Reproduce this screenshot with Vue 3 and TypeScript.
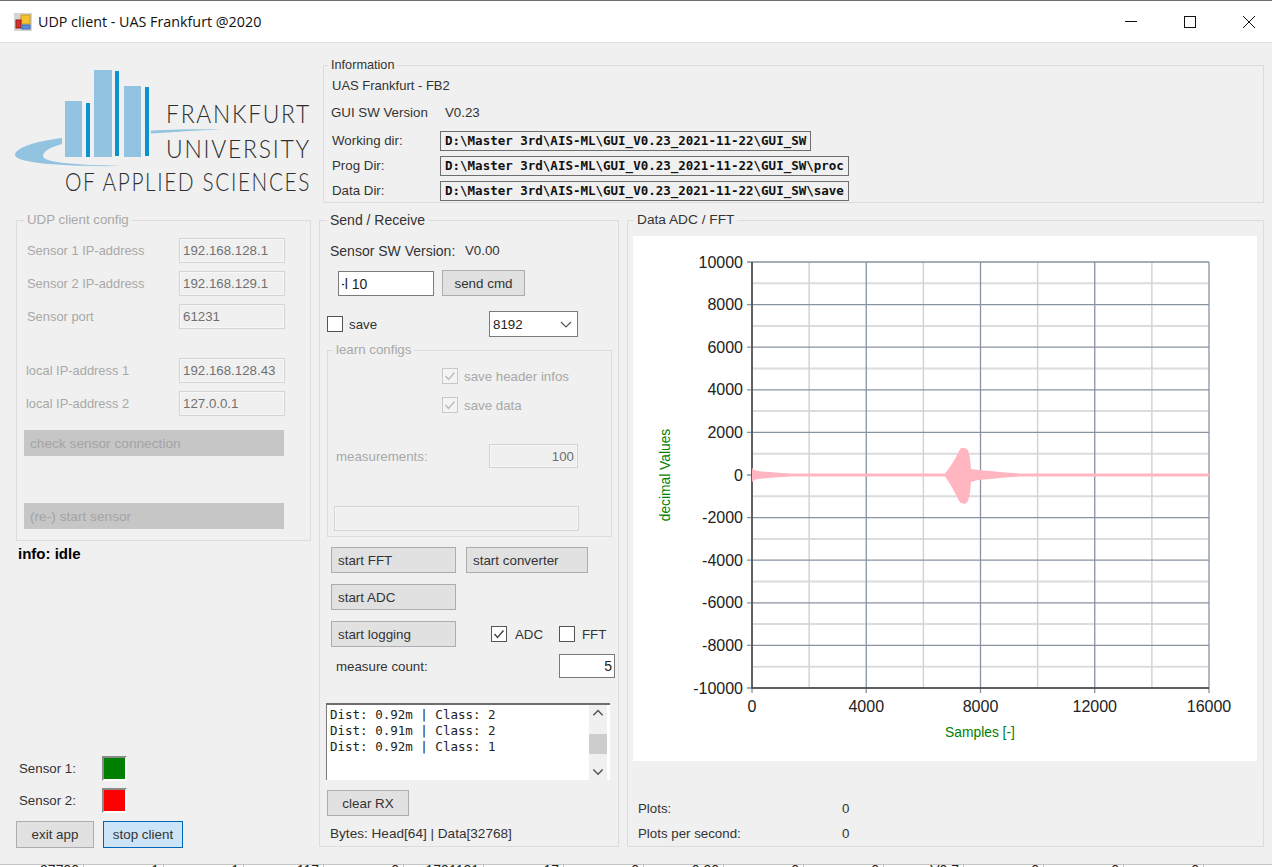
<template>
  <div class="window">
    <header class="titlebar">
      <svg class="app-icon" width="18" height="18" viewBox="0 0 18 18">
        <rect width="18" height="18" fill="#d4d4d4" />
        <rect x="7" y="2" width="9" height="9" fill="#f5c12e" stroke="#c89a1c" />
        <rect x="2" y="7" width="5" height="8" fill="#d8302a" stroke="#8f1d1a" />
        <rect x="8" y="12" width="8" height="4" fill="#5b8fdc" stroke="#3b6cb5" />
      </svg>
      <span class="title">UDP client - UAS Frankfurt @2020</span>
      <div class="win-controls">
        <svg width="58" height="42" viewBox="0 0 58 42"><path d="M23 20.5h12" stroke="#111" fill="none" /></svg>
        <svg width="58" height="42" viewBox="0 0 58 42"><rect x="23.5" y="15.5" width="11" height="11" stroke="#111" fill="none" /></svg>
        <svg width="58" height="42" viewBox="0 0 58 42"><path d="M23 15l12 12M35 15L23 27" stroke="#111" fill="none" /></svg>
      </div>
    </header>

    <main class="body">
      <section class="left">
        <svg class="logo" width="319" height="177" viewBox="0 43 319 177">
          <path d="M62 138C30 142 15 149 15 155c0 7 40 12 110 11-45-1-82-3-82-10 0-5 8-9 19-12z" fill="#92c3e0" />
          <path d="M151 130.500c25-1 50-1.500 70-1-25 1-48 2.500-70 4z" fill="#92c3e0" />
          <rect x="65" y="101" width="17" height="56" fill="#92c3e0" />
          <rect x="86" y="103" width="4" height="54" fill="#0b93cf" />
          <rect x="94" y="70" width="18" height="87" fill="#92c3e0" />
          <rect x="115" y="71" width="4" height="85" fill="#0b93cf" />
          <rect x="124" y="86" width="17" height="71" fill="#92c3e0" />
          <rect x="145" y="87" width="4" height="69" fill="#0b93cf" />
          <text x="166" y="123" class="logo-text" textLength="145" lengthAdjust="spacingAndGlyphs">FRANKFURT</text>
          <text x="166" y="158" class="logo-text" textLength="145" lengthAdjust="spacingAndGlyphs">UNIVERSITY</text>
          <text x="65" y="191" class="logo-text" textLength="246" lengthAdjust="spacingAndGlyphs">OF APPLIED SCIENCES</text>
        </svg>

        <div class="group udp disabled">
          <span class="legend">UDP client config</span>
          <div class="field" v-for="f in udpFields" :key="f.label" :class="f.cls">
            <label>{{ f.label }}</label>
            <input class="dis-input" readonly :value="f.value" />
          </div>
          <button class="dis-btn check">check sensor connection</button>
          <button class="dis-btn restart">(re-) start sensor</button>
        </div>

        <div class="info-idle">info: idle</div>

        <div class="bottom-left">
          <div class="sensor"><span>Sensor 1:</span><i class="lamp green"></i></div>
          <div class="sensor s2"><span>Sensor 2:</span><i class="lamp red"></i></div>
          <div class="app-btns">
            <button class="btn exit">exit app</button>
            <button class="btn stop">stop client</button>
          </div>
        </div>
      </section>

      <section class="right">
        <div class="group information">
          <span class="legend">Information</span>
          <div class="line first">UAS Frankfurt - FB2</div>
          <div class="line version"><span class="ver-label">GUI SW Version</span><span>V0.23</span></div>
          <div class="dir" v-for="d in dirs" :key="d.label">
            <span class="dir-label">{{ d.label }}</span>
            <span class="dir-box">{{ d.path }}</span>
          </div>
        </div>

        <div class="work">
          <div class="group send">
            <span class="legend">Send / Receive</span>
            <div class="sw"><span class="sw-label">Sensor SW Version:</span><span>V0.00</span></div>
            <div class="cmd-row">
              <input class="cmd" readonly value="-l 10" />
              <button class="btn send-cmd">send cmd</button>
            </div>
            <div class="save-row">
              <span class="check-box"></span><span class="save-label">save</span>
              <div class="select">
                <span>8192</span>
                <svg width="12" height="7" viewBox="0 0 12 7"><path d="M1 1l5 5 5-5" stroke="#555" stroke-width="1.200" fill="none" /></svg>
              </div>
            </div>

            <div class="group learn disabled">
              <span class="legend">learn configs</span>
              <div class="opt first-opt">
                <span class="check-box dis"><svg width="14" height="14" viewBox="0 0 14 14"><path d="M2.500 7l3 3.500 6-7" stroke="#bbb" stroke-width="1.400" fill="none" /></svg></span>
                <span>save header infos</span>
              </div>
              <div class="opt second-opt">
                <span class="check-box dis"><svg width="14" height="14" viewBox="0 0 14 14"><path d="M2.500 7l3 3.500 6-7" stroke="#bbb" stroke-width="1.400" fill="none" /></svg></span>
                <span>save data</span>
              </div>
              <div class="measure">
                <label>measurements:</label>
                <input class="dis-input num" readonly value="100" />
              </div>
              <input class="dis-input wide" readonly value="" />
            </div>

            <div class="btn-row r1">
              <button class="btn big">start FFT</button>
              <button class="btn conv">start converter</button>
            </div>
            <div class="btn-row r2"><button class="btn big">start ADC</button></div>
            <div class="btn-row r3">
              <button class="btn big">start logging</button>
              <span class="check-box adc"><svg width="14" height="14" viewBox="0 0 14 14"><path d="M2.500 7l3 3.500 6-7" stroke="#444" stroke-width="1.400" fill="none" /></svg></span>
              <span class="adc-label">ADC</span>
              <span class="check-box fft"></span>
              <span class="fft-label">FFT</span>
            </div>
            <div class="count-row">
              <span>measure count:</span>
              <input class="count" readonly value="5" />
            </div>

            <div class="rx">
              <div class="rx-text">
                <div v-for="(l, i) in rxLines" :key="i">{{ l }}</div>
              </div>
              <div class="scroll">
                <svg width="18" height="18" viewBox="0 0 18 18"><path d="M4 11l5-5 5 5" stroke="#555" stroke-width="1.600" fill="none" /></svg>
                <div class="thumb"></div>
                <svg width="18" height="18" viewBox="0 0 18 18"><path d="M4 7l5 5 5-5" stroke="#555" stroke-width="1.600" fill="none" /></svg>
              </div>
            </div>

            <button class="btn clear">clear RX</button>
            <div class="bytes">Bytes: Head[64] | Data[32768]</div>
          </div>

          <div class="group data">
            <span class="legend">Data ADC / FFT</span>
            <svg class="chart" width="624" height="525" viewBox="633 236 624 525">
              <rect x="633" y="236" width="624" height="525" fill="#fff" />
              <path v-for="y in minorY" :key="'my' + y" :d="`M752 ${y}H1209`" stroke="#dcdcdc" stroke-width="2" />
              <path v-for="x in minorX" :key="'mx' + x" :d="`M${x} 262V688`" stroke="#d4d4d4" stroke-width="1.500" />
              <path v-for="t in yTicks" :key="'y' + t.v" :d="`M747 ${t.y}H1209`" stroke="#8793a0" stroke-width="1.300" />
              <path v-for="t in xTicks" :key="'x' + t.v" :d="`M${t.x} 262V693`" stroke="#8793a0" stroke-width="1.300" />
              <path d="M752 262V688H1209" stroke="#444" stroke-width="1.500" fill="none" />
              <polygon :points="wave" fill="#ffb6c1" />
              <text v-for="t in yTicks" :key="'yl' + t.v" x="743" :y="t.y + 5.500" class="tick" text-anchor="end">{{ t.v }}</text>
              <text v-for="t in xTicks" :key="'xl' + t.v" :x="t.x" y="712" class="tick" text-anchor="middle">{{ t.v }}</text>
              <text x="980" y="737" class="axis" text-anchor="middle">Samples [-]</text>
              <text class="axis" text-anchor="middle" transform="translate(670 475) rotate(-90)">decimal Values</text>
            </svg>
            <div class="plots">
              <div class="plot-row"><span class="plot-label">Plots:</span><span>0</span></div>
              <div class="plot-row"><span class="plot-label">Plots per second:</span><span>0</span></div>
            </div>
          </div>
        </div>
      </section>
    </main>

    <footer class="behind">
      <span v-for="(c, i) in behindCells" :key="i" class="cell">{{ c }}</span>
    </footer>
  </div>
</template>

<script setup lang="ts">
interface UdpField {
  label: string
  value: string
  cls?: string
}

const udpFields: UdpField[] = [
  { label: 'Sensor 1 IP-address', value: '192.168.128.1' },
  { label: 'Sensor 2 IP-address', value: '192.168.129.1' },
  { label: 'Sensor port', value: '61231' },
  { label: 'local IP-address 1', value: '192.168.128.43', cls: 'local first-local' },
  { label: 'local IP-address 2', value: '127.0.0.1', cls: 'local' },
]

const dirs = [
  { label: 'Working dir:', path: 'D:\\Master 3rd\\AIS-ML\\GUI_V0.23_2021-11-22\\GUI_SW' },
  { label: 'Prog Dir:', path: 'D:\\Master 3rd\\AIS-ML\\GUI_V0.23_2021-11-22\\GUI_SW\\proc' },
  { label: 'Data Dir:', path: 'D:\\Master 3rd\\AIS-ML\\GUI_V0.23_2021-11-22\\GUI_SW\\save' },
]

const rxLines = ['Dist: 0.92m | Class: 2', 'Dist: 0.91m | Class: 2', 'Dist: 0.92m | Class: 1']

// plot area in page pixels
const left = 752
const right = 1209
const top = 262
const bottom = 688
const toX = (v: number) => left + ((right - left) * v) / 16000
const toY = (v: number) => bottom - ((bottom - top) * (v + 10000)) / 20000

const yTicks: { v: number; y: number }[] = []
for (let v = 10000; v >= -10000; v -= 2000) yTicks.push({ v, y: toY(v) })
const minorY: number[] = []
for (let v = -9000; v < 10000; v += 2000) minorY.push(toY(v))
const xTicks = [0, 4000, 8000, 12000, 16000].map((v) => ({ v, x: toX(v) }))
const minorX = [2000, 6000, 10000, 14000].map(toX)

// envelope of the signal: [x, half height above, half height below]
const envelope: [number, number, number][] = [
  [752, 7, 7], [755, 4.5, 4.5], [762, 3.5, 3.5], [775, 2.5, 2.5], [790, 1.500, 1.500],
  [945, 1.500, 1.500], [950, 8, 9], [955, 16, 18], [959, 24, 26], [961, 27, 28],
  [965, 27, 29], [968, 25, 26], [970, 17, 18], [971, 6, 7], [978, 5, 5],
  [990, 4, 4], [1005, 2.5, 2.5], [1020, 1.500, 1.500], [1209, 1.500, 1.500],
]
const wave = [
  ...envelope.map(([x, a]) => `${x},${475 - a}`),
  ...[...envelope].reverse().map(([x, , b]) => `${x},${475 + b}`),
].join(' ')

const behindCells = ['37790', '1', '1', '117', '0', '1791121', '17', '0', '0.30', '0', '0', 'V0.7', '0', '0', '0', '-']
</script>

<style>
html,
body {
  margin: 0;
  overflow: hidden;
  background: #fff;
}
</style>

<style scoped>
.window {
  width: 1272px;
  height: 867px;
  display: flex;
  flex-direction: column;
  font-family: "Liberation Sans", Arial, sans-serif;
  font-size: 13.300px;
  color: #333;
  overflow: hidden;
}

.titlebar {
  height: 41px;
  flex: none;
  display: flex;
  align-items: center;
  padding-left: 14px;
  background: #fff;
  border-top: 1px solid #6f6f6f;
  border-bottom: 1px solid #dfdfdf;
  box-sizing: content-box;
}

.app-icon {
  margin-top: 1px;
}

.title {
  margin-left: 6px;
  font-family: "Open Sans", sans-serif;
  font-size: 14.300px;
  color: #111;
}

.win-controls {
  margin-left: auto;
  display: flex;
  margin-right: -6px;
}

.win-controls svg {
  margin-left: 1px;
}

.body {
  height: 821px;
  flex: none;
  display: flex;
  background: #f0f0f0;
}

.left {
  width: 319px;
  flex: none;
  display: flex;
  flex-direction: column;
}

.logo {
  display: block;
  flex: none;
}

.logo-text {
  font-family: Lato, "Liberation Sans", sans-serif;
  font-weight: 300;
  font-size: 26px;
  letter-spacing: 2px;
  fill: #2e2e2e;
}

.group {
  position: relative;
  box-sizing: border-box;
  border: 1px solid #dcdcdc;
}

.legend {
  position: absolute;
  top: -10px;
  left: 6px;
  padding: 0 3px;
  background: #f0f0f0;
  line-height: 18px;
  white-space: nowrap;
}

.disabled,
.disabled .legend {
  color: #a8a8a8;
}

.udp {
  margin-left: 16px;
  width: 295px;
  height: 321px;
  padding: 17px 7px 0;
  flex: none;
}

.udp .legend {
  left: 7px;
}

.field {
  display: flex;
  align-items: center;
  justify-content: space-between;
  width: 261px;
  height: 25px;
  margin-bottom: 8px;
  padding-left: 3px;
  box-sizing: border-box;
  font-size: 12.900px;
}

.field.local {
  padding-left: 2px;
}

.first-local {
  margin-top: 29px;
}

.dis-input {
  box-sizing: border-box;
  width: 106px;
  height: 25px;
  padding: 0 3px;
  border: 1px solid #d4d4d4;
  box-shadow: inset 0 0 0 1px #f7f7f7;
  background: #f0f0f0;
  color: #707070;
  font: 13.300px "Liberation Sans", Arial, sans-serif;
  outline: none;
}

.dis-btn {
  display: block;
  width: 260px;
  height: 26px;
  padding: 0 0 0 6px;
  border: none;
  background: #c6c6c6;
  color: #a4a4a4;
  font: 13.700px "Liberation Sans", Arial, sans-serif;
  text-align: left;
}

.check {
  margin-top: 14px;
}

.restart {
  margin-top: 47px;
}

.info-idle {
  margin: 5px 0 0 18px;
  font-weight: 700;
  font-size: 15px;
  color: #000;
  line-height: 16px;
}

.bottom-left {
  margin-top: auto;
  padding: 0 0 16px 16px;
}

.sensor {
  display: flex;
  align-items: center;
  padding-left: 3px;
  height: 25px;
}

.sensor span {
  width: 83px;
}

.s2 {
  margin-top: 7px;
}

.lamp {
  display: block;
  box-sizing: border-box;
  width: 25px;
  height: 25px;
  border: 2px solid #8a8a8a;
  border-right-color: #fff;
  border-bottom-color: #fff;
}

.green {
  background: #008000;
}

.red {
  background: #ff0000;
}

.app-btns {
  display: flex;
  gap: 9px;
  margin-top: 8px;
}

.btn {
  box-sizing: border-box;
  height: 26px;
  padding: 0;
  border: 1px solid #adadad;
  background: #e1e1e1;
  color: #333;
  font: 13.400px "Liberation Sans", Arial, sans-serif;
}

.exit {
  width: 78px;
  height: 27px;
}

.stop {
  width: 80px;
  height: 27px;
  border-color: #0067b8;
  background: #cce4f7;
}

.right {
  flex: 1;
  padding-top: 22px;
  min-width: 0;
}

.information {
  margin: 0 8px 0 4px;
  height: 138px;
  padding: 11px 0 0 8px;
}

.information .legend {
  left: 4px;
  font-size: 12.700px;
}

.line {
  height: 18px;
  line-height: 18px;
}

.first {
  font-size: 13px;
}

.version {
  display: flex;
  margin-top: 9px;
  margin-left: -1px;
}

.ver-label {
  width: 114px;
}

.dir {
  display: flex;
  align-items: center;
  height: 20px;
  margin-top: 5px;
}

.version + .dir {
  margin-top: 9px;
}

.dir-label {
  width: 108px;
  margin-bottom: 2px;
}

.dir-box {
  box-sizing: border-box;
  height: 20px;
  padding: 0 4px;
  border: 1.500px solid #6e6e6e;
  line-height: 17px;
  font-family: "DejaVu Sans Mono", monospace;
  font-weight: 700;
  font-size: 12.500px;
  color: #111;
  white-space: nowrap;
}

.work {
  display: flex;
  gap: 8px;
  margin-top: 17px;
}

.send {
  width: 300px;
  height: 627px;
  flex: none;
  padding: 0 0 0 7px;
}

.send .legend {
  left: 7px;
  font-size: 14px;
}

.send .learn .legend {
  left: 5px;
  font-size: 13.300px;
}

.sw {
  display: flex;
  margin: 21px 0 0 3px;
  line-height: 18px;
}

.sw-label {
  width: 135px;
  font-size: 14px;
}

.cmd-row {
  display: flex;
  gap: 8px;
  margin: 11px 0 0 11px;
}

.cmd {
  box-sizing: border-box;
  width: 96px;
  height: 25px;
  padding: 0 3px;
  border: 1px solid #7a7a7a;
  background: #fff;
  color: #222;
  font: 14px "Liberation Sans", Arial, sans-serif;
  text-indent: -2px;
  outline: none;
}

.send-cmd {
  width: 83px;
  margin-top: -1px;
}

.save-row {
  display: flex;
  align-items: center;
  margin-top: 15px;
  height: 26px;
}

.check-box {
  display: block;
  flex: none;
  box-sizing: border-box;
  width: 16px;
  height: 16px;
  border: 1px solid #555;
  background: #fff;
}

.check-box svg {
  display: block;
}

.save-label {
  margin-left: 6px;
  width: 140px;
}

.select {
  display: flex;
  align-items: center;
  justify-content: space-between;
  box-sizing: border-box;
  width: 89px;
  height: 26px;
  padding: 0 5px 0 3px;
  border: 1px solid #7a7a7a;
  background: #fff;
  color: #222;
}

.learn {
  width: 285px;
  height: 187px;
  margin-top: 13px;
  padding-top: 17px;
}

.opt {
  display: flex;
  align-items: center;
  gap: 6px;
  margin-left: 114px;
  height: 16px;
}

.second-opt {
  margin-top: 13px;
}

.check-box.dis {
  border-color: #c8c8c8;
  background: #f4f4f4;
}

.measure {
  display: flex;
  align-items: center;
  margin: 31px 0 0 8px;
}

.measure label {
  width: 153px;
}

.num {
  width: 89px;
  height: 24px;
  text-align: right;
}

.wide {
  display: block;
  width: 245px;
  height: 25px;
  margin: 38px 0 0 6px;
}

.btn-row {
  display: flex;
  align-items: center;
  margin-left: 4px;
}

.r1 {
  margin-top: 10px;
}

.r2 {
  margin-top: 11px;
}

.r3 {
  margin-top: 11px;
}

.big {
  width: 125px;
  padding-left: 6px;
  text-align: left;
}

.conv {
  width: 122px;
  margin-left: 10px;
  padding-left: 6px;
  text-align: left;
}

.adc {
  margin-left: 35px;
}

.adc-label {
  margin-left: 8px;
  width: 44px;
}

.fft-label {
  margin-left: 7px;
}

.count-row {
  display: flex;
  align-items: center;
  justify-content: space-between;
  width: 279px;
  margin: 7px 0 0 9px;
  box-sizing: border-box;
}

.count {
  box-sizing: border-box;
  width: 56px;
  height: 24px;
  padding: 0 2px;
  border: 1px solid #7a7a7a;
  background: #fff;
  color: #222;
  text-align: right;
  font: 14px "Liberation Sans", Arial, sans-serif;
  outline: none;
}

.rx {
  display: flex;
  box-sizing: border-box;
  width: 284px;
  height: 77px;
  margin: 25px 0 0 -1px;
  border-top: 2px solid #6e6e6e;
  border-left: 1px solid #7a7a7a;
  background: #fff;
}

.rx-text {
  flex: 1;
  padding: 2px 0 0 3px;
  font-family: "DejaVu Sans Mono", monospace;
  font-size: 12.500px;
  line-height: 16px;
  color: #222;
  white-space: pre;
}

.scroll {
  display: flex;
  flex-direction: column;
  justify-content: space-between;
  width: 18px;
  margin-right: 3px;
  background: #f0f0f0;
}

.thumb {
  height: 22px;
  margin-top: 12px;
  margin-bottom: 9px;
  background: #cdcdcd;
}

.clear {
  display: block;
  width: 82px;
  margin: 10px 0 0 0;
}

.bytes {
  margin: 9px 0 0 3px;
  line-height: 18px;
  font-size: 13.600px;
}

.data {
  width: 637px;
  height: 627px;
  flex: none;
  padding: 15px 0 0 5px;
}

.data .legend {
  font-size: 13.700px;
}

.chart {
  display: block;
}

.tick {
  font-family: "Liberation Sans", Arial, sans-serif;
  font-size: 16px;
  fill: #222;
}

.axis {
  font-family: "Liberation Sans", Arial, sans-serif;
  font-size: 13.800px;
  fill: #008000;
}

.plots {
  margin: 39px 0 0 5px;
}

.plot-row {
  display: flex;
  height: 18px;
  line-height: 18px;
  margin-bottom: 7px;
}

.plot-label {
  width: 204px;
}

.behind {
  height: 3px;
  flex: none;
  display: flex;
  overflow: hidden;
  padding-left: 4px;
  background: #fff;
  border-top: 1px solid #c4c4c4;
  box-sizing: border-box;
}

.cell {
  box-sizing: border-box;
  width: 80px;
  flex: none;
  padding-right: 4px;
  border-right: 1px solid #bbb;
  text-align: right;
  line-height: 10px;
  height: 3px;
  font-size: 14px;
  color: #222;
}
</style>
